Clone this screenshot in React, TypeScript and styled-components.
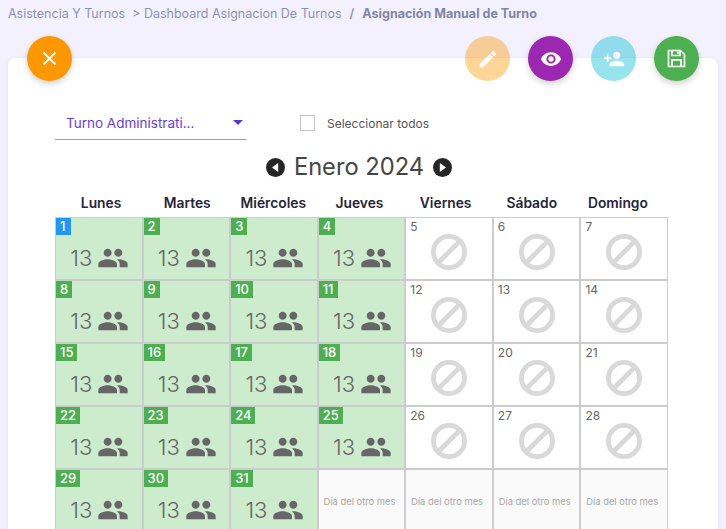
import React from 'react';
import styled, { createGlobalStyle } from 'styled-components';
import { MdClose, MdEdit, MdPeople, MdPersonAdd, MdVisibility } from 'react-icons/md';

const GlobalStyle = createGlobalStyle`
    html, body {
        margin: 0;
        height: 100%;
        overflow: hidden;
        background: #f3f1fe;
        font-family: Inter, "Liberation Sans", sans-serif;
    }
`;

const Page = styled.div`
    height: 529px;
    overflow: hidden;
    padding: 0 8px;
`;

const Breadcrumb = styled.div`
    display: flex;
    align-items: center;
    height: 26px;
    font-size: 12.5px;
    color: #8d92b4;
    white-space: pre;
`;

const Slash = styled.span`
    margin: 0 8px;
    font-weight: 600;
`;

const Current = styled.span`
    font-size: 12.55px;
    font-weight: 700;
    color: #7f86a8;
`;

const Card = styled.div`
    display: flow-root;
    margin-top: 32px;
    height: 600px;
    background: #fff;
    border-radius: 8px;
    box-shadow: 0 1px 4px rgba(90, 80, 160, 0.12);
`;

const Fabs = styled.div`
    display: flex;
    align-items: center;
    gap: 18px;
    margin-top: -22px;
    padding: 0 19px;
`;

const Fab = styled.button<{ $color: string; $faded?: boolean }>`
    display: flex;
    align-items: center;
    justify-content: center;
    width: 45px;
    height: 45px;
    padding: 0;
    border: 0;
    border-radius: 50%;
    color: #fff;
    background: ${p => p.$color};
    opacity: ${p => (p.$faded ? 0.4 : 1)};
    box-shadow: ${p => (p.$faded ? 'none' : '0 3px 6px rgba(0, 0, 0, 0.18)')};
`;

const Spacer = styled.div`
    flex: 1;
`;

const Filters = styled.div`
    display: flex;
    align-items: center;
    margin-top: 23px;
    padding-left: 47px;
`;

const Select = styled.div`
    display: flex;
    align-items: center;
    justify-content: space-between;
    box-sizing: border-box;
    width: 191px;
    height: 36px;
    padding: 2px 2px 0 11px;
    border-bottom: 1px solid #9e9e9e;
    font-size: 13.5px;
    color: #6b3de4;
`;

const Caret = styled.span`
    width: 0;
    height: 0;
    margin-right: 1px;
    border-left: 5px solid transparent;
    border-right: 5px solid transparent;
    border-top: 5px solid #5c35cf;
`;

const CheckLabel = styled.label`
    display: flex;
    align-items: center;
    gap: 12px;
    margin: 2px 0 0 54px;
    font-size: 12px;
    color: #555;
`;

const CheckBox = styled.span`
    box-sizing: border-box;
    width: 15px;
    height: 16px;
    background: #fff;
    border: 1px solid #c4c4c4;
`;

const Title = styled.div`
    display: flex;
    align-items: center;
    justify-content: center;
    gap: 9px;
    width: 702px;
    margin-top: 13px;
    font-size: 23.7px;
    line-height: 28px;
    color: #454545;
`;

const Calendar = styled.div`
    width: 613px;
    margin: 14px 0 0 47px;
`;

const WeekDays = styled.div`
    display: grid;
    grid-template-columns: repeat(7, 1fr);
    height: 22px;
    padding: 0 7px 0 3px;
`;

const WeekDay = styled.div`
    text-align: center;
    font-size: 13.8px;
    font-weight: 600;
    line-height: 16px;
    color: #25253a;
`;

const Grid = styled.div`
    display: grid;
    grid-template-columns: repeat(7, 1fr);
    grid-auto-rows: 61px;
    gap: 2px;
    padding: 1px;
    background: #cccccc;
`;

const Cell = styled.div<{ $kind: 'active' | 'blocked' | 'other' }>`
    position: relative;
    display: flex;
    align-items: center;
    justify-content: center;
    background: ${p =>
        p.$kind === 'active' ? '#cdebcd' : p.$kind === 'other' ? '#fafafa' : '#fff'};
`;

const DayBadge = styled.span<{ $today?: boolean }>`
    position: absolute;
    top: 0;
    left: 0;
    box-sizing: border-box;
    min-width: 15px;
    padding: 0 4px;
    font-size: 13px;
    font-weight: 500;
    line-height: 17px;
    color: #fff;
    background: ${p => (p.$today ? '#2196f3' : '#4caf50')};
`;

const DayNumber = styled.span`
    position: absolute;
    top: 1px;
    left: 4px;
    font-size: 12px;
    line-height: 15px;
    color: #666;
`;

const Count = styled.div`
    display: flex;
    align-items: center;
    gap: 5px;
    margin: 19px 0 0 2px;
    font-size: 22px;
    font-weight: 300;
    color: #666;
`;

const PeopleIcon = styled(MdPeople)`
    color: #666;
`;

const BlockIcon = styled.svg`
    margin-top: 6px;
    color: #d9d9d9;
`;

const OtherMonth = styled.span`
    margin: 1px 4px 0 0;
    font-size: 9.4px;
    color: #a8a8a8;
`;

const days = ['Lunes', 'Martes', 'Miércoles', 'Jueves', 'Viernes', 'Sábado', 'Domingo'];

const ArrowCircle = ({ flip }: { flip?: boolean }) => (
    <svg width="19" height="19" viewBox="0 0 19 19" aria-hidden="true">
        <circle cx="9.5" cy="9.5" r="9.5" fill="#262626" />
        <path
            d={flip ? 'M6.8 5 L13 9.5 L6.8 14 Z' : 'M12.2 5 L6 9.5 L12.2 14 Z'}
            fill="#fff"
        />
    </svg>
);

const SaveIcon = () => (
    <svg
        width="19"
        height="19"
        viewBox="0 0 19 19"
        fill="none"
        stroke="currentColor"
        strokeWidth="1.7"
        aria-hidden="true"
    >
        <path d="M1.5 1.5 H13.5 L17.5 5.5 V17.5 H1.5 Z" />
        <path d="M5 1.5 V6.5 H13 V1.5" />
        <path d="M5 17.5 V10.8 H14 V17.5" />
        <path d="M10.8 2.5 V5" />
    </svg>
);

const Blocked = () => (
    <BlockIcon width="36" height="36" viewBox="0 0 36 36" aria-hidden="true">
        <circle cx="18" cy="18" r="15.6" fill="none" stroke="currentColor" strokeWidth="4.8" />
        <path d="M29 7 L7 29" stroke="currentColor" strokeWidth="4.8" />
    </BlockIcon>
);

const DayCell = ({ day }: { day: number }) => {
    if (day > 31) {
        return (
            <Cell $kind="other">
                <OtherMonth>Día del otro mes</OtherMonth>
            </Cell>
        );
    }
    // lunes a jueves tienen turno asignado
    if ((day - 1) % 7 < 4) {
        return (
            <Cell $kind="active">
                <DayBadge $today={day === 1}>{day}</DayBadge>
                <Count>
                    13 <PeopleIcon size={32} />
                </Count>
            </Cell>
        );
    }
    return (
        <Cell $kind="blocked">
            <DayNumber>{day}</DayNumber>
            <Blocked />
        </Cell>
    );
};

const App = () => (
    <Page>
        <GlobalStyle />
        <Breadcrumb>
            Asistencia Y Turnos {' > '}Dashboard Asignacion De Turnos
            <Slash>/</Slash>
            <Current>Asignación Manual de Turno</Current>
        </Breadcrumb>
        <Card>
            <Fabs>
                <Fab $color="#ff9800">
                    <MdClose size={23} />
                </Fab>
                <Spacer />
                <Fab $color="#ff9800" $faded>
                    <MdEdit size={22} />
                </Fab>
                <Fab $color="#9c27b0">
                    <MdVisibility size={22} />
                </Fab>
                <Fab $color="#00bcd4" $faded>
                    <MdPersonAdd size={22} />
                </Fab>
                <Fab $color="#4caf50">
                    <SaveIcon />
                </Fab>
            </Fabs>
            <Filters>
                <Select>
                    Turno Administrati...
                    <Caret />
                </Select>
                <CheckLabel>
                    <CheckBox />
                    Seleccionar todos
                </CheckLabel>
            </Filters>
            <Title>
                <ArrowCircle />
                Enero 2024
                <ArrowCircle flip />
            </Title>
            <Calendar>
                <WeekDays>
                    {days.map(d => (
                        <WeekDay key={d}>{d}</WeekDay>
                    ))}
                </WeekDays>
                <Grid>
                    {Array.from({ length: 35 }, (_, i) => (
                        <DayCell key={i} day={i + 1} />
                    ))}
                </Grid>
            </Calendar>
        </Card>
    </Page>
);

export default App;
